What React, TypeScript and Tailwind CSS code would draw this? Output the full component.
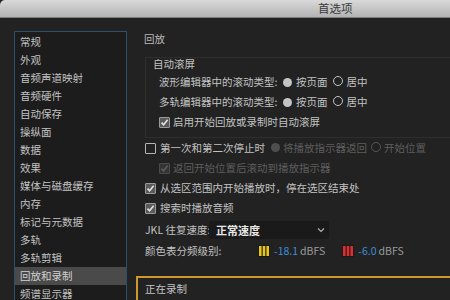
import React from "react";

const font = { fontFamily: '"Noto Sans CJK SC", "Noto Sans", sans-serif' };

const sections = [
  "常规",
  "外观",
  "音频声道映射",
  "音频硬件",
  "自动保存",
  "操纵面",
  "数据",
  "效果",
  "媒体与磁盘缓存",
  "内存",
  "标记与元数据",
  "多轨",
  "多轨剪辑",
  "回放和录制",
  "频谱显示器",
];

function Radio({ on, disabled }: { on?: boolean; disabled?: boolean }) {
  if (on) {
    return (
      <span
        className={`inline-block w-[9px] h-[9px] rounded-full shrink-0 ${
          disabled ? "bg-[#4e4e4e]" : "bg-[#c4c4c4]"
        }`}
      />
    );
  }
  return (
    <span
      className={`inline-block w-[10px] h-[10px] rounded-full border-[1.5px] shrink-0 ${
        disabled ? "border-[#555]" : "border-[#c4c4c4]"
      }`}
    />
  );
}

function Check({ on, disabled }: { on?: boolean; disabled?: boolean }) {
  return (
    <span
      className={`inline-flex items-center justify-center w-[11px] h-[11px] rounded-[1px] border shrink-0 ${
        disabled
          ? "border-[#4a4a4a] bg-[#343434]"
          : on
          ? "border-[#9a9a9a] bg-[#5a5a5a]"
          : "border-[#b4b4b4] border-[1.5px]"
      }`}
    >
      {on && (
        <svg width="9" height="9" viewBox="0 0 9 9">
          <path
            d="M1.5 4.6 L3.6 6.8 L7.6 1.8"
            fill="none"
            stroke={disabled ? "#5c5c5c" : "#e2e2e2"}
            strokeWidth="1.6"
          />
        </svg>
      )}
    </span>
  );
}

function Meter({ color }: { color: string }) {
  return (
    <svg width="12" height="12" viewBox="0 0 12 12" className="shrink-0">
      <rect x="0" y="0" width="12" height="12" fill="#1a1a1a" />
      <rect x="1" y="1" width="2.6" height="10" fill={color} />
      <rect x="4.7" y="1" width="2.6" height="10" fill={color} />
      <rect x="8.4" y="1" width="2.6" height="10" fill={color} />
    </svg>
  );
}

export default function App() {
  return (
    <div
      className="w-[450px] h-[300px] overflow-hidden bg-[#222222] text-[10.5px] text-[#c2c2c2] flex flex-col whitespace-nowrap"
      style={font}
    >
      {/* title bar */}
      <div className="h-[18px] shrink-0 bg-gradient-to-b from-[#d9d9d9] to-[#b3b3b3] border-b border-[#7e7e7e] flex items-center pl-[318px] text-[11.5px] text-[#3a3a3a] rounded-tl-[5px]">
        首选项
      </div>

      <div className="flex flex-1 min-h-0">
        {/* sidebar */}
        <div className="pl-[14px] pt-[13px] shrink-0">
          <div className="w-[113px] h-[300px] border border-[#2e4d70] bg-[#1c1c1c] pt-[1px]">
            {sections.map((s) => (
              <div
                key={s}
                className={`h-[18px] flex items-center pl-[5px] ${
                  s === "回放和录制" ? "bg-[#4a4a4a] text-[#d0d0d0]" : ""
                }`}
              >
                {s}
              </div>
            ))}
          </div>
        </div>

        {/* right panel */}
        <div className="ml-[9px] w-[340px] shrink-0 pt-[11px]">
          <div className="h-[20px] flex items-center pl-[8px] text-[#b8b8b8]">回放</div>

          <div className="ml-[9px] mt-[8px] border border-[#2e2e2e] pb-[5px]">
            <div className="h-[12px] flex items-center pl-[7px]">自动滚屏</div>
            <div className="pl-[13px] pt-[2px]">
              <div className="h-[20px] flex items-center">
                <span className="w-[124px]">波形编辑器中的滚动类型:</span>
                <Radio on />
                <span className="ml-[4px]">按页面</span>
                <span className="ml-[5px]"><Radio /></span>
                <span className="ml-[4px]">居中</span>
              </div>
              <div className="h-[20px] flex items-center">
                <span className="w-[124px]">多轨编辑器中的滚动类型:</span>
                <Radio on />
                <span className="ml-[4px]">按页面</span>
                <span className="ml-[5px]"><Radio /></span>
                <span className="ml-[4px]">居中</span>
              </div>
              <div className="h-[20px] flex items-center gap-[3px]">
                <Check on />
                <span>启用开始回放或录制时自动滚屏</span>
              </div>
            </div>
          </div>

          <div className="pl-[9px]">
            <div className="h-[20px] flex items-center">
              <Check />
              <span className="ml-[4px]">第一次和第二次停止时</span>
              <span className="ml-[6px]"><Radio on disabled /></span>
              <span className="ml-[3px] text-[#5e5e5e]">将播放指示器返回</span>
              <span className="ml-[4px]"><Radio disabled /></span>
              <span className="ml-[3px] text-[#5e5e5e]">开始位置</span>
            </div>
            <div className="h-[20px] flex items-center gap-[3px] pl-[14px]">
              <Check on disabled />
              <span className="text-[#5e5e5e]">返回开始位置后滚动到播放指示器</span>
            </div>
            <div className="h-[20px] flex items-center gap-[4px]">
              <Check on />
              <span>从选区范围内开始播放时，停在选区结束处</span>
            </div>
            <div className="h-[20px] flex items-center gap-[4px]">
              <Check on />
              <span>搜索时播放音频</span>
            </div>

            <div className="h-[22px] mt-[1px] flex items-center">
              <span className="w-[64px]">JKL 往复速度:</span>
              <div className="w-[120px] h-[18px] bg-[#1a1a1a] rounded-[2px] flex items-center pl-[7px] pr-[4px] justify-between">
                <span className="text-[11px] text-[#e6e6e6] font-semibold">正常速度</span>
                <svg width="8" height="6" viewBox="0 0 8 6">
                  <path d="M1 1.5 L4 4.5 L7 1.5" fill="none" stroke="#b0b0b0" strokeWidth="1.2" />
                </svg>
              </div>
            </div>

            <div className="h-[20px] flex items-center">
              <span className="w-[113px]">颜色表分频级别:</span>
              <Meter color="#e6c31d" />
              <span className="ml-[4px] text-[#3d8fd8]">-18.1</span>
              <span className="ml-[2px] text-[#9a9a9a]">dBFS</span>
              <span className="ml-[17px]"><Meter color="#dc2f2f" /></span>
              <span className="ml-[4px] text-[#3d8fd8]">-6.0</span>
              <span className="ml-[2px] text-[#9a9a9a]">dBFS</span>
            </div>
          </div>

          <div className="mt-[15px] border-2 border-[#cf962a] h-[60px] pl-[7px]">
            <div className="h-[22px] flex items-center">正在录制</div>
          </div>
        </div>
      </div>
    </div>
  );
}
